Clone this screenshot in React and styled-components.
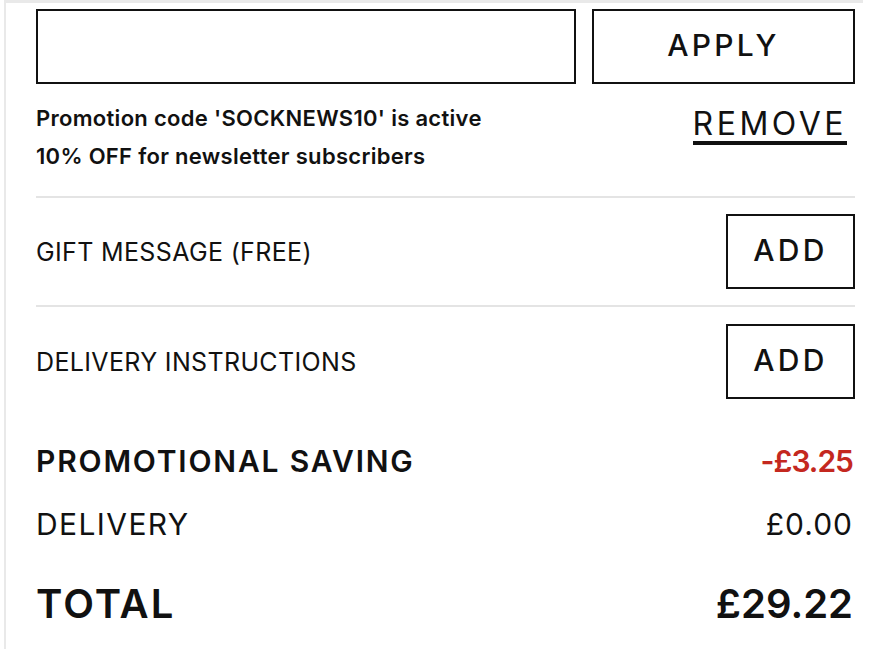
import React from "react";
import styled, { createGlobalStyle } from "styled-components";

const Global = createGlobalStyle`
  html, body { margin: 0; padding: 0; background: #fff; }
  body { font-family: "Inter", "Noto Sans", sans-serif; color: #111; }
  * { box-sizing: border-box; }
`;

const Frame = styled.div`
  margin-left: 4px;
  width: 859px;
  height: 649px;
  border-top: 3px solid #e9e9e9;
  border-left: 2px solid #e9e9e9;
  padding: 6px 8px 0 30px;
  overflow: hidden;
`;

const CodeRow = styled.div`
  display: flex;
  gap: 16px;
`;

const CodeInput = styled.input`
  flex: 1;
  height: 75px;
  border: 2px solid #111;
  border-radius: 0;
  outline: none;
  font: inherit;
  padding: 0 16px;
`;

const OutlineButton = styled.button`
  width: ${(p) => p.$w}px;
  height: 75px;
  background: #fff;
  border: 2px solid #111;
  border-radius: 0;
  font-family: inherit;
  font-size: 30px;
  font-weight: 500;
  letter-spacing: 3.3px;
  line-height: 1;
  color: #111;
  padding: 0 0 4px 0;
  cursor: pointer;
`;

const PromoRow = styled.div`
  display: flex;
  justify-content: space-between;
  align-items: flex-start;
  margin-top: 15px;
  padding-bottom: 21px;
  border-bottom: 2px solid #e4e4e4;
`;

const PromoText = styled.div`
  font-size: 22px;
  font-weight: 600;
  letter-spacing: 0.3px;
  line-height: 38px;
`;

const RemoveLink = styled.a`
  font-size: 32px;
  font-weight: 400;
  letter-spacing: 3.5px;
  line-height: 1;
  margin-top: 9px;
  margin-right: 8px;
  padding-bottom: 1px;
  border-bottom: 4px solid #111;
  color: #111;
  text-decoration: none;
  cursor: pointer;
`;

const OptionRow = styled.div`
  display: flex;
  justify-content: space-between;
  align-items: center;
  height: ${(p) => p.$h}px;
  border-bottom: ${(p) => (p.$line ? "2px solid #e4e4e4" : "none")};
`;

const OptionLabel = styled.span`
  font-size: 25px;
  font-weight: 400;
  letter-spacing: 0.35px;
`;

const Summary = styled.div`
  display: flex;
  flex-direction: column;
  margin-top: 13px;
`;

const SumRow = styled.div`
  display: flex;
  justify-content: space-between;
  align-items: center;
  height: ${(p) => p.$h}px;
  font-size: ${(p) => p.$size}px;
  font-weight: ${(p) => (p.$bold ? 600 : 400)};
`;

const Label = styled.span`
  letter-spacing: ${(p) => p.$ls}px;
`;

const Amount = styled.span`
  color: ${(p) => (p.$red ? "#c4281f" : "#111")};
  letter-spacing: ${(p) => p.$ls || 0}px;
  margin-right: 2px;
`;

export default function App() {
  return (
    <>
      <Global />
      <Frame>
        <CodeRow>
          <CodeInput aria-label="Promotion code" />
          <OutlineButton $w={263}>APPLY</OutlineButton>
        </CodeRow>
        <PromoRow>
          <PromoText>
            Promotion code 'SOCKNEWS10' is active
            <br />
            10% OFF for newsletter subscribers
          </PromoText>
          <RemoveLink>REMOVE</RemoveLink>
        </PromoRow>
        <OptionRow $h={109} $line>
          <OptionLabel>GIFT MESSAGE (FREE)</OptionLabel>
          <OutlineButton $w={129}>ADD</OutlineButton>
        </OptionRow>
        <OptionRow $h={109}>
          <OptionLabel>DELIVERY INSTRUCTIONS</OptionLabel>
          <OutlineButton $w={129}>ADD</OutlineButton>
        </OptionRow>
        <Summary>
          <SumRow $h={64} $size={30} $bold>
            <Label $ls={1.8}>PROMOTIONAL SAVING</Label>
            <Amount $red $ls={-1}>-£3.25</Amount>
          </SumRow>
          <SumRow $h={62} $size={30}>
            <Label $ls={1.4}>DELIVERY</Label>
            <Amount $ls={1}>£0.00</Amount>
          </SumRow>
          <SumRow $h={96} $size={40} $bold>
            <Label $ls={2}>TOTAL</Label>
            <Amount>£29.22</Amount>
          </SumRow>
        </Summary>
      </Frame>
    </>
  );
}
